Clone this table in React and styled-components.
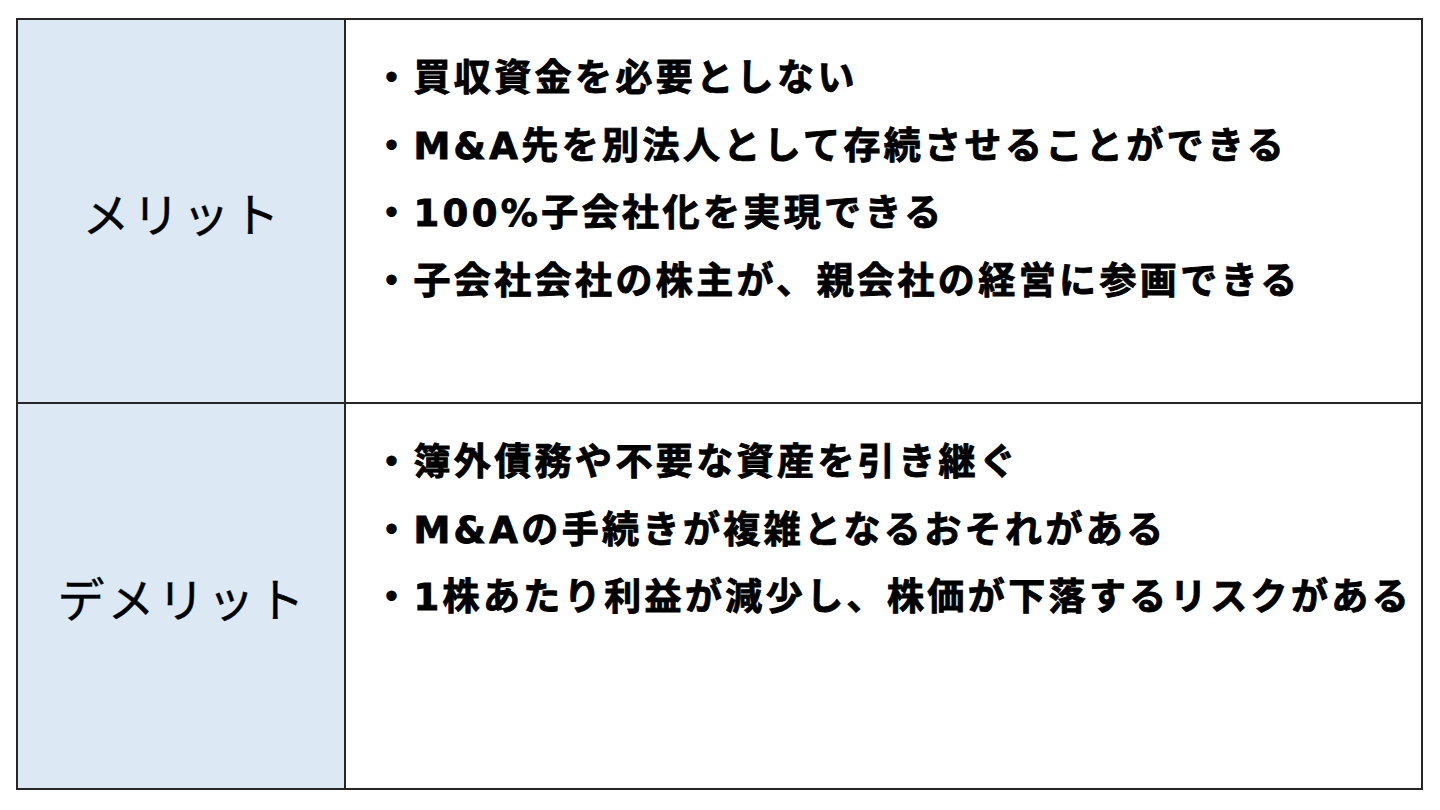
import React from "react";
import styled, { createGlobalStyle } from "styled-components";

const Global = createGlobalStyle`
  html, body { margin: 0; padding: 0; background: #ffffff; }
  body { font-family: "Noto Sans CJK JP", sans-serif; }
`;

const Table = styled.div`
  box-sizing: border-box;
  margin: 18px 0 0 16px;
  width: 1407px;
  height: 772px;
  border: 2px solid #262626;
  display: grid;
  grid-template-columns: 328px 1fr;
  grid-template-rows: 1fr 1fr;
`;

const Label = styled.div`
  box-sizing: border-box;
  background: #dde8f5;
  border-right: 2px solid #262626;
  border-bottom: ${(p) => (p.$last ? "none" : "2px solid #262626")};
  display: flex;
  align-items: center;
  justify-content: center;
  font-family: "Noto Sans CJK JP", sans-serif;
  font-weight: 400;
  font-size: 47px;
  letter-spacing: 3px;
  color: #000;
  -webkit-text-stroke: 0.4px #000;
  padding-left: 3px;
`;

const Content = styled.div`
  box-sizing: border-box;
  border-bottom: ${(p) => (p.$last ? "none" : "2px solid #262626")};
  padding: 25px 0 0 27px;
  display: flex;
  flex-direction: column;
`;

const Item = styled.div`
  font-family: "DejaVu Sans", "Noto Sans CJK JP", sans-serif;
  font-weight: 700;
  font-size: 37px;
  letter-spacing: 3.4px;
  line-height: 67.5px;
  white-space: nowrap;
  color: #000;
  -webkit-text-stroke: 0.9px #000;
`;

const rows = [
  {
    label: "メリット",
    items: [
      "・買収資金を必要としない",
      "・M&A先を別法人として存続させることができる",
      "・100%子会社化を実現できる",
      "・子会社会社の株主が、親会社の経営に参画できる",
    ],
  },
  {
    label: "デメリット",
    items: [
      "・簿外債務や不要な資産を引き継ぐ",
      "・M&Aの手続きが複雑となるおそれがある",
      "・1株あたり利益が減少し、株価が下落するリスクがある",
    ],
  },
];

export default function App() {
  return (
    <>
      <Global />
      <Table>
        {rows.map((r, i) => (
          <React.Fragment key={r.label}>
            <Label $last={i === rows.length - 1}>{r.label}</Label>
            <Content $last={i === rows.length - 1}>
              {r.items.map((t) => (
                <Item key={t}>{t}</Item>
              ))}
            </Content>
          </React.Fragment>
        ))}
      </Table>
    </>
  );
}
